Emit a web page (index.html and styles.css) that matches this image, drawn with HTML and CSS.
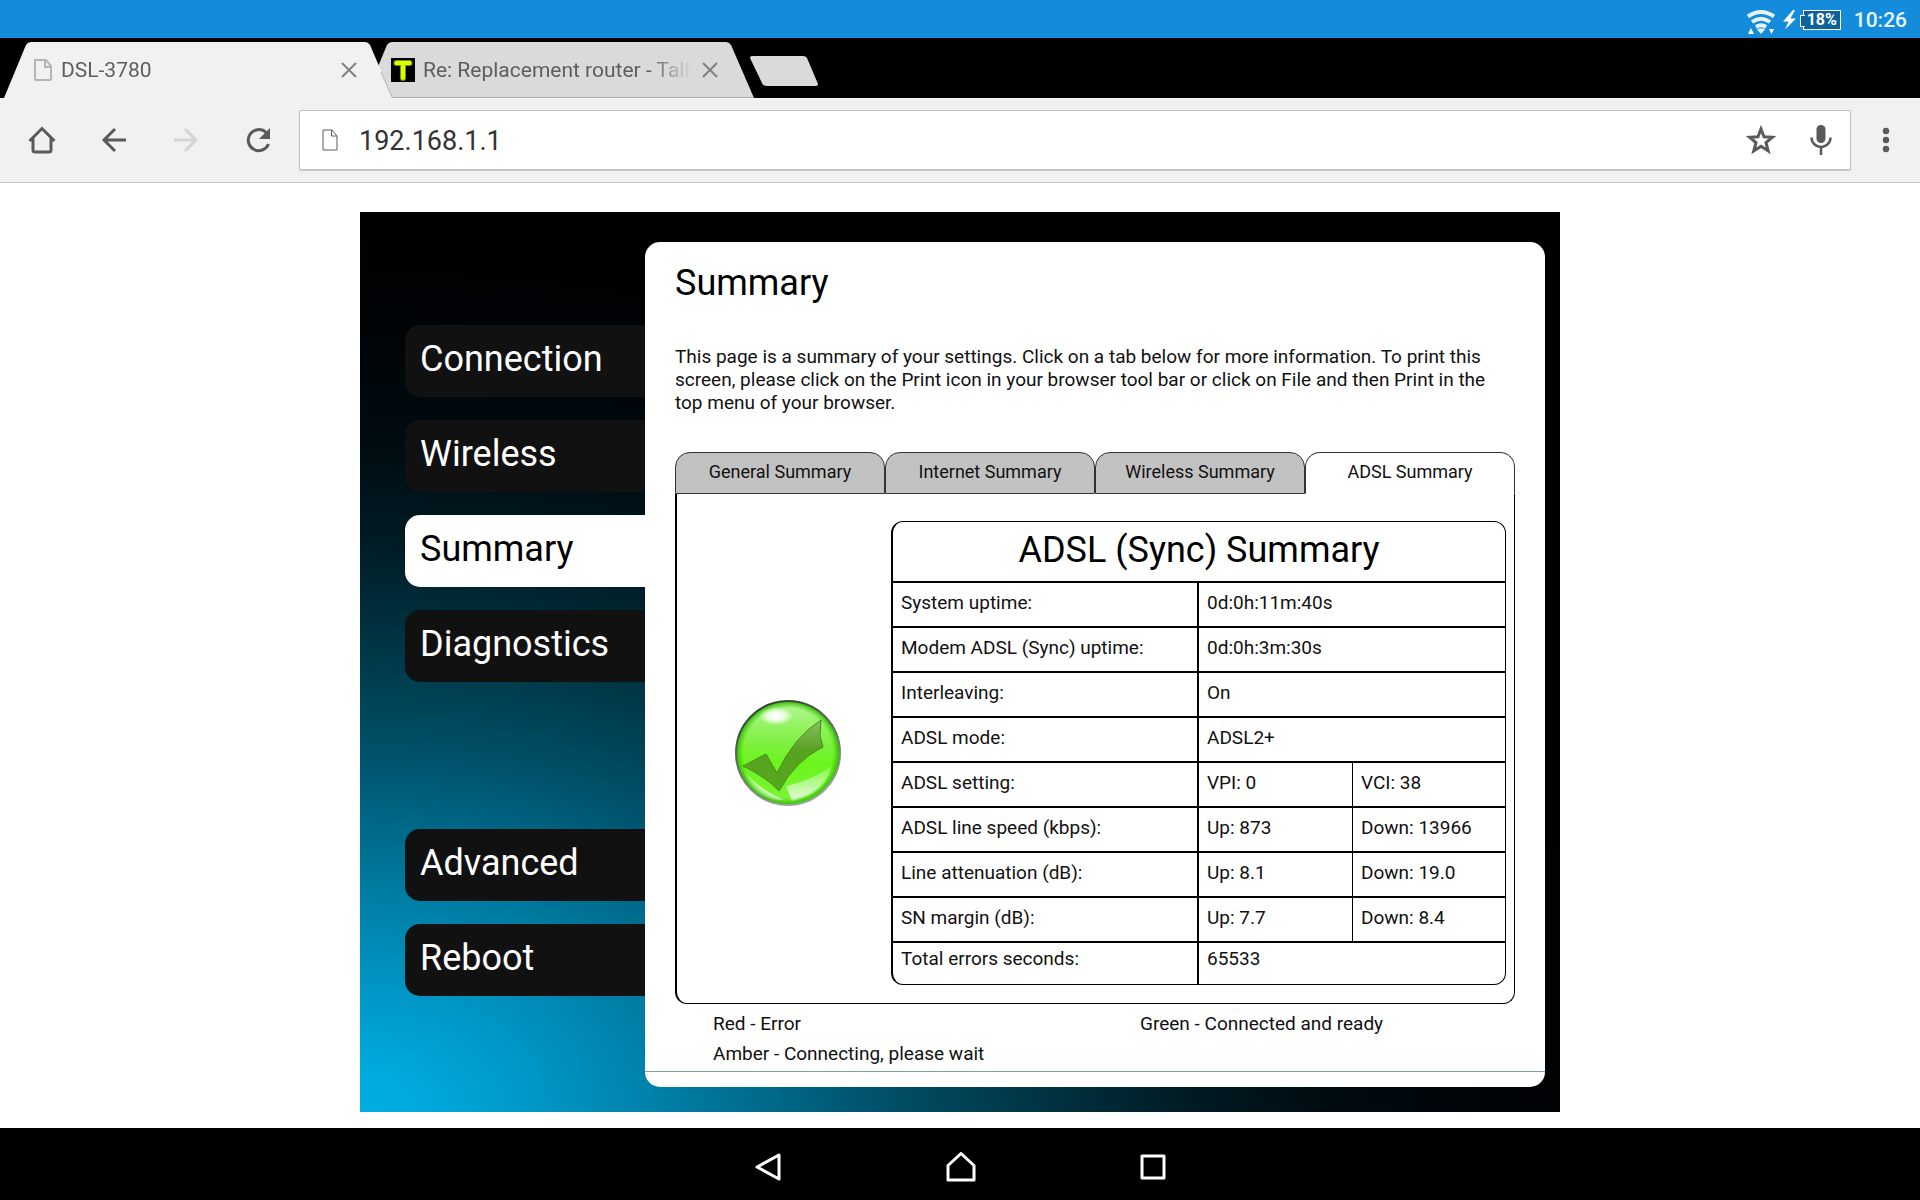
FILE: index.html
```
<!DOCTYPE html>
<html lang="en">
<head>
    <meta charset="UTF-8">
    <meta name="viewport" content="width=device-width, initial-scale=1.0">
    <title>DSL-3780</title>
    <link rel="stylesheet" href="styles.css">
</head>
<body>
    <!-- Status bar -->
    <div class="status-bar">
        <svg class="wifi" width="30" height="26" viewBox="0 0 30 26" fill="none" stroke="#e8f4fc" stroke-width="4">
            <path d="M2 7.500Q15 -1.500 28 7.500"/>
            <path d="M6 13Q15 6.500 24 13"/>
            <path d="M10 18Q15 14.500 20 18"/>
            <path d="M11 20.500Q15 18 19 20.500L15 25z" fill="#e8f4fc" stroke="none"/>
            <path d="M2 25h6l-3-6zM23 20h5l-2.500 5z" fill="#fff" stroke="none"/>
        </svg>
        <svg width="14" height="20" viewBox="0 0 14 20" fill="#fff"><path d="M10 0L0 11.500h5.500L2 19.500 13 8.500H7.500L12 0z"/></svg>
        <span class="battery">18%</span>
        <span class="clock">10:26</span>
    </div>

    <!-- Browser tabs -->
    <div class="tab-strip">
        <div class="browser-tab current">
            <svg class="tab-shape" viewBox="0 0 390 56" preserveAspectRatio="none"><path d="M0 56L22 3Q24 0 27 0H362Q365 0 367 3L389 54.500L390 56z"/><path class="edge" d="M378 30L389.500 56"/></svg>
            <svg class="favicon page" width="20" height="24" viewBox="0 0 20 24" fill="none" stroke="#b5b5b5" stroke-width="2"><path d="M2 2h11l5 6v13q0 1-1 1H3q-1 0-1-1zM12 2v7h6"/></svg>
            <span class="tab-title">DSL-3780</span>
            <button class="close" aria-label="Close tab"><svg width="16" height="16" viewBox="0 0 16 16" stroke="#808080" stroke-width="2"><path d="M1 1l14 14M15 1L1 15"/></svg></button>
        </div>
        <div class="browser-tab">
            <svg class="tab-shape" viewBox="0 0 390 56" preserveAspectRatio="none"><path d="M0 56L22 3Q24 0 27 0H362Q365 0 367 3L390 56z"/><path class="edge" d="M24 55.500H390"/></svg>
            <svg class="favicon" width="24" height="24" viewBox="0 0 24 24"><path d="M0 0h24v24H0z"/><path d="M5.500 5h13M12 5v15" stroke="#7c9400" stroke-width="6" stroke-linecap="round"/><path d="M5.500 5h13M12 5v15" stroke="#dcff00" stroke-width="4" stroke-linecap="round"/></svg>
            <span class="tab-title">Re: Replacement router - Talk</span>
            <button class="close" aria-label="Close tab"><svg width="16" height="16" viewBox="0 0 16 16" stroke="#808080" stroke-width="2"><path d="M1 1l14 14M15 1L1 15"/></svg></button>
        </div>
        <button class="new-tab" aria-label="New tab"><svg width="70" height="32" viewBox="0 0 70 32" fill="#dadada"><path d="M3 1H54Q57 1 58 3L69 29Q69 31 67 31H18Q14 31 13 28L1 3Q1 1 3 1z"/></svg></button>
    </div>

    <!-- Toolbar -->
    <div class="toolbar">
        <button class="tool" aria-label="Home"><svg width="28" height="28" viewBox="0 0 28 28" fill="none" stroke="#5a5a5a" stroke-width="3"><path d="M1.500 15L14 2.500 26.500 15M5 12v12q0 2 2 2h14q2 0 2-2V12"/></svg></button>
        <button class="tool" aria-label="Back"><svg width="28" height="28" viewBox="0 0 28 28" fill="none" stroke="#5a5a5a" stroke-width="3"><path d="M26 14H4M15 3L4 14l11 11"/></svg></button>
        <button class="tool" aria-label="Forward" disabled><svg width="28" height="28" viewBox="0 0 28 28" fill="none" stroke="#d4d4d4" stroke-width="3"><path d="M2 14h22M13 3l11 11-11 11"/></svg></button>
        <button class="tool reload" aria-label="Reload"><svg width="28" height="28" viewBox="0 0 28 28"><path d="M22 6.500A10.500 10.500 0 1 0 24.500 18" fill="none" stroke="#5a5a5a" stroke-width="3"/><path d="M26 2v11H15z" fill="#5a5a5a"/></svg></button>
        <div class="address">
            <svg width="16" height="22" viewBox="0 0 16 22" fill="none" stroke="#5a5a5a"><path d="M1 1h9l5 6v14H1zM9.500 1v6H15"/></svg>
            <input class="url" type="text" value="192.168.1.1" aria-label="Address">
            <button class="star" aria-label="Bookmark"><svg width="30" height="30" viewBox="0 0 30 30" fill="none" stroke="#5a5a5a" stroke-width="3"><path d="M15 4l3 7.700 8.500.500-6.500 5.300 2.200 8.500L15 21.300 7.800 26 10 17.500 3.500 12.200l8.500-.500z"/></svg></button>
            <button aria-label="Voice search"><svg width="22" height="30" viewBox="0 0 22 30"><rect x="6.500" width="9" height="18" rx="4.500" fill="#5a5a5a"/><path d="M1.500 12.500a9.500 9.500 0 0 0 19 0M11 22v8" fill="none" stroke="#5a5a5a" stroke-width="2.500"/></svg></button>
        </div>
        <button class="menu" aria-label="Menu"><svg width="8" height="26" viewBox="0 0 8 26" fill="#5a5a5a"><circle cx="4" cy="4" r="3.200"/><circle cx="4" cy="13" r="3.200"/><circle cx="4" cy="22" r="3.200"/></svg></button>
    </div>

    <!-- Router page -->
    <main>
        <div class="router">
            <nav class="side-menu">
                <a href="#">Connection</a>
                <a href="#">Wireless</a>
                <a href="#" class="active">Summary</a>
                <a href="#">Diagnostics</a>
                <a href="#" class="lower">Advanced</a>
                <a href="#">Reboot</a>
            </nav>

            <section class="card">
                <div class="content">
                    <h1>Summary</h1>
                    <p class="intro">This page is a summary of your settings. Click on a tab below for more information. To print this screen, please click on the Print icon in your browser tool bar or click on File and then Print in the top menu of your browser.</p>

                    <div class="tabs">
                        <a href="#">General Summary</a>
                        <a href="#">Internet Summary</a>
                        <a href="#">Wireless Summary</a>
                        <a href="#" class="active">ADSL Summary</a>
                    </div>

                    <div class="tab-content">
                        <div class="state">
                            <svg width="108" height="108" viewBox="0 0 108 108">
                                <defs>
                                    <linearGradient id="ball" x1="0" y1="0" x2="0" y2="1">
                                        <stop offset="0" stop-color="#b4f896"/>
                                        <stop offset=".42" stop-color="#7cf03c"/>
                                        <stop offset=".6" stop-color="#6cf51c"/>
                                        <stop offset="1" stop-color="#7af53a"/>
                                    </linearGradient>
                                    <linearGradient id="rim" x1=".2" y1="0" x2=".6" y2="1">
                                        <stop offset="0" stop-color="#2c3c2c"/>
                                        <stop offset="1" stop-color="#a0a8a0"/>
                                    </linearGradient>
                                    <radialGradient id="edge">
                                        <stop offset=".86" stop-color="#38c800" stop-opacity="0"/>
                                        <stop offset="1" stop-color="#2cb400"/>
                                    </radialGradient>
                                    <radialGradient id="shine">
                                        <stop offset="0" stop-color="#fff"/>
                                        <stop offset=".5" stop-color="#fff" stop-opacity=".8"/>
                                        <stop offset="1" stop-color="#fff" stop-opacity="0"/>
                                    </radialGradient>
                                    <linearGradient id="low" x1="0" y1="0" x2="0" y2="1">
                                        <stop offset="0" stop-color="#fff" stop-opacity=".15"/>
                                        <stop offset="1" stop-color="#fff" stop-opacity=".8"/>
                                    </linearGradient>
                                    <linearGradient id="tick" x1="0" y1="0" x2="0" y2="1">
                                        <stop offset="0" stop-color="#86c45c"/>
                                        <stop offset=".38" stop-color="#5fa32e"/>
                                        <stop offset=".42" stop-color="#56a31e"/>
                                        <stop offset="1" stop-color="#58a820"/>
                                    </linearGradient>
                                </defs>
                                <circle cx="54" cy="54" r="52" fill="url(#ball)"/>
                                <path d="M9 70Q24 90 50 101Q28 102 15 84zM58 102L52 87Q82 80 98 66Q92 95 58 102z" fill="url(#low)"/>
                                <circle cx="54" cy="54" r="52" fill="url(#edge)" stroke="url(#rim)" stroke-width="2"/>
                                <ellipse cx="42" cy="17" rx="17" ry="9" fill="url(#shine)"/>
                                <path d="M9 67L32 55 43 74Q60 38 87 21L86 37 89 48Q62 61 45 92Q32 78 9 67z" fill="url(#tick)" stroke="#4a8a20"/>
                            </svg>
                        </div>
                        <table class="summary">
                            <colgroup><col class="name"><col><col></colgroup>
                            <thead>
                                <tr><th colspan="3">ADSL (Sync) Summary</th></tr>
                            </thead>
                            <tbody>
                                <tr><th>System uptime:</th><td colspan="2">0d:0h:11m:40s</td></tr>
                                <tr><th>Modem ADSL (Sync) uptime:</th><td colspan="2">0d:0h:3m:30s</td></tr>
                                <tr><th>Interleaving:</th><td colspan="2">On</td></tr>
                                <tr><th>ADSL mode:</th><td colspan="2">ADSL2+</td></tr>
                                <tr><th>ADSL setting:</th><td>VPI: 0</td><td>VCI: 38</td></tr>
                                <tr><th>ADSL line speed (kbps):</th><td>Up: 873</td><td>Down: 13966</td></tr>
                                <tr><th>Line attenuation (dB):</th><td>Up: 8.1</td><td>Down: 19.0</td></tr>
                                <tr><th>SN margin (dB):</th><td>Up: 7.7</td><td>Down: 8.4</td></tr>
                                <tr class="last"><th>Total errors seconds:</th><td colspan="2">65533</td></tr>
                            </tbody>
                        </table>
                    </div>

                    <div class="legend">
                        <span>Red - Error</span>
                        <span>Green - Connected and ready</span>
                        <span>Amber - Connecting, please wait</span>
                    </div>
                </div>
            </section>
        </div>
    </main>

    <!-- Navigation bar -->
    <div class="nav-bar">
        <button aria-label="Back"><svg width="28" height="30" viewBox="0 0 28 30"><path d="M25 3v24L3 15z"/></svg></button>
        <button aria-label="Home"><svg width="30" height="30" viewBox="0 0 30 30"><path d="M15 1.500L28 13.500V28H2V13.500z"/></svg></button>
        <button aria-label="Recent apps"><svg width="26" height="26" viewBox="0 0 26 26"><path d="M2 2h22v22H2z"/></svg></button>
    </div>
</body>
</html>
```

FILE: styles.css
```
* {
    box-sizing: border-box;
}

body {
    font-family: Roboto, "Liberation Sans", sans-serif;
    margin: 0;
    min-height: 100vh;
    display: flex;
    flex-direction: column;
    background: #fff;
    color: #111;
}

button {
    padding: 0;
    border: 0;
    background: none;
    display: flex;
    align-items: center;
    justify-content: center;
}

/* Status bar */
.status-bar {
    height: 38px;
    padding: 1px 13px 0;
    display: flex;
    align-items: center;
    justify-content: flex-end;
    background: #148cdb;
    color: #e8f4fc;
}

.wifi {
    margin: 4px 7px 0 0;
}

.battery {
    position: relative;
    width: 38px;
    height: 20px;
    margin: 0 13px 0 6px;
    border: 1px solid #fff;
    background: #0e629b;
    color: #fff;
    font-size: 16px;
    font-weight: 700;
    line-height: 18px;
    text-align: center;
}

/* Battery terminal */
.battery::before {
    content: "";
    position: absolute;
    left: -4px;
    top: 4px;
    width: 4px;
    height: 10px;
    border: 1px solid #fff;
    border-right: 0;
    background: #0e629b;
}

.clock {
    font-size: 21px;
    font-weight: 500;
}

/* Browser tabs */
.tab-strip {
    height: 60px;
    padding: 4px 4px 0;
    display: flex;
    background: #000;
}

.browser-tab {
    position: relative;
    width: 389px;
    height: 56px;
    padding: 0 36px 0 26px;
    margin-right: -28px;
    display: flex;
    align-items: center;
    color: #5e5e5e;
    font-size: 21px;
}

.browser-tab.current {
    z-index: 1;
    padding-left: 29px;
}

.tab-shape {
    position: absolute;
    left: 0;
    top: 0;
    width: 100%;
    height: 100%;
    fill: #dadada;
}

.current .tab-shape {
    fill: #f1f1f1;
}

.edge {
    stroke: #b0b0b0;
}

.favicon,
.tab-title,
.close {
    position: relative;
}

.tab-title {
    flex: 1;
    margin: 0 8px;
    overflow: hidden;
    white-space: nowrap;
    mask-image: linear-gradient(to right, #000 83%, transparent 99%);
}

.new-tab {
    margin: 13px 0 0 23px;
    align-self: flex-start;
}

/* Toolbar */
.toolbar {
    height: 85px;
    padding: 0 30px 0 28px;
    display: flex;
    align-items: center;
    background: #f1f1f1;
    border-bottom: 1px solid #c4c4c4;
}

.tool {
    margin-right: 44px;
}

.tool.reload {
    margin-right: 27px;
}

.address {
    flex: 1;
    height: 60px;
    margin-right: 31px;
    padding: 0 18px 0 22px;
    display: flex;
    align-items: center;
    background: #fff;
    border: 1px solid #c0c0c0;
    border-radius: 2px;
    box-shadow: 0 1px 1px #c8c8c8;
}

.url {
    flex: 1;
    min-width: 0;
    margin-left: 21px;
    padding: 2px 0 0;
    border: 0;
    outline: 0;
    color: #333;
    font-family: inherit;
    font-size: 27px;
}

.star {
    margin-right: 34px;
}

/* Router page */
main {
    flex: 1;
    padding: 29px 16px 16px;
}

.router {
    max-width: 1200px;
    margin: 0 auto;
    padding: 30px 15px 25px 0;
    display: flex;
    background: radial-gradient(ellipse 1300px 100% at 0 100%, #00aee2, #00abe0 4%, #009aca 12%, #0080a8 23%, #006280 34%, #004c62 42%, #00303e 54%, #001a22 64%, #000c12 74%, #000306 88%, #000);
}

.side-menu {
    width: 285px;
    padding: 83px 0 0 45px;
    display: flex;
    flex-direction: column;
    gap: 23px;
}

.side-menu a {
    height: 72px;
    padding: 0 15px;
    border-radius: 15px 0 0 15px;
    background: #111;
    color: #fff;
    font-size: 36px;
    line-height: 68px;
    text-decoration: none;
}

.side-menu a.active {
    background: #fff;
    color: #000;
}

.side-menu a.lower {
    margin-top: 124px;
}

.card {
    flex: 1;
    min-width: 0;
    padding-bottom: 15px;
    border-radius: 15px;
    background: #fff;
}

.content {
    padding: 20px 30px 0;
    border-bottom: 1px solid #7f9ea6;
}

h1 {
    margin: 0 0 41px;
    color: #000;
    font-size: 36px;
    font-weight: 400;
    line-height: 42px;
}

.intro {
    margin: 0 0 38px;
    font-size: 19px;
    line-height: 23px;
}

.tabs {
    display: flex;
}

.tabs a {
    flex: 1;
    height: 42px;
    border: 1px solid #333;
    border-radius: 15px 15px 0 0;
    background: #c2c2c2;
    color: #111;
    font-size: 18px;
    line-height: 38px;
    text-align: center;
    text-decoration: none;
}

.tabs a.active {
    border-bottom-color: #fff;
    background: #fff;
}

.tab-content {
    padding: 27px 8px 18px 0;
    display: flex;
    border: solid #000;
    border-width: 0 1px 1px 2px;
    border-radius: 0 0 12px 12px;
}

.state {
    flex: 1;
    padding-left: 8px;
    display: flex;
    align-items: center;
    justify-content: center;
}

.summary {
    width: 615px;
    table-layout: fixed;
    border: solid #000;
    border-width: 1px 1px 1px 2px;
    border-radius: 12px;
    border-spacing: 0;
    font-size: 19px;
    line-height: 22px;
}

.name {
    width: 50%;
}

.summary th,
.summary td {
    height: 45px;
    padding: 0 8px 4px;
    border-bottom: 2px solid #000;
    font-weight: 400;
    text-align: left;
}

.summary tbody th {
    border-right: 2px solid #000;
}

.summary td + td {
    border-left: 1px solid #000;
}

.summary thead th {
    height: 61px;
    padding-bottom: 4px;
    color: #000;
    font-size: 36px;
    line-height: 42px;
    text-align: center;
}

.summary .last th,
.summary .last td {
    height: 41px;
    padding-bottom: 10px;
    border-bottom: 0;
}

.legend {
    padding: 5px 38px 2px;
    display: grid;
    grid-template-columns: 427px 1fr;
    font-size: 19px;
    line-height: 30px;
}

/* Navigation bar */
.nav-bar {
    height: 72px;
    padding-top: 6px;
    display: flex;
    align-items: center;
    justify-content: center;
    gap: 164px;
    background: #000;
}

.nav-bar svg {
    fill: none;
    stroke: #fff;
    stroke-width: 3;
    stroke-linejoin: round;
}
```
